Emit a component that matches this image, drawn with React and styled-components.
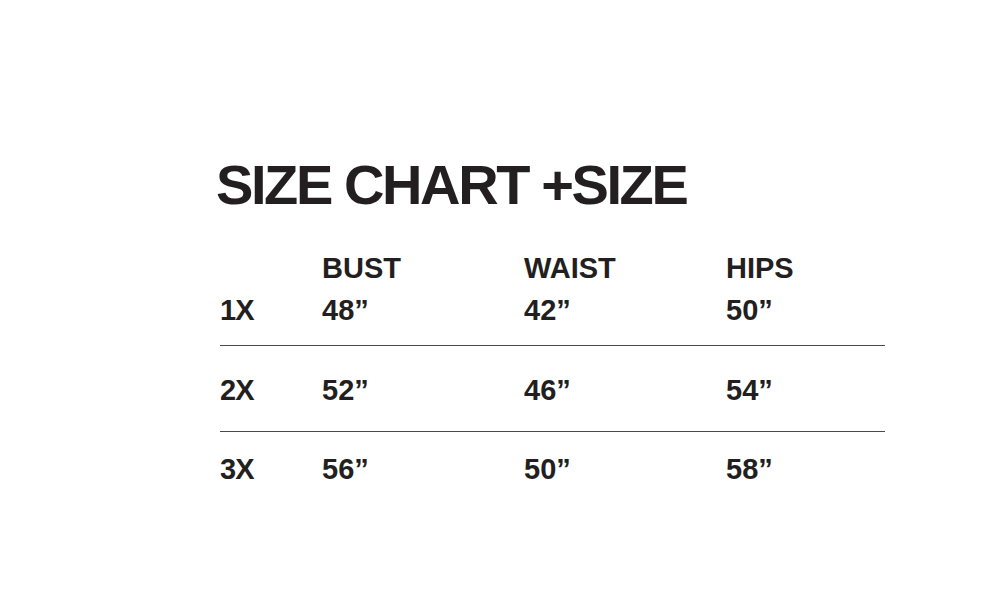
import React from "react";
import styled, { createGlobalStyle } from "styled-components";

const GlobalStyle = createGlobalStyle`
  body {
    margin: 0;
    background: #ffffff;
    font-family: "Liberation Sans", Arial, sans-serif;
    color: #231f20;
  }
`;

const Page = styled.div`
  width: 988px;
  height: 596px;
  padding: 153px 0 0 220px;
  box-sizing: border-box;
`;

const Title = styled.h1`
  margin: 0 0 0 -4px;
  font-size: 56px;
  line-height: 64px;
  letter-spacing: -2.4px;
  font-weight: 700;
`;

const Table = styled.div`
  width: 665px;
  margin-top: 35px;
`;

const Row = styled.div`
  display: grid;
  grid-template-columns: 102px 202px 202px 1fr;
  align-items: end;
  padding: ${(p) => p.$pad};
  border-bottom: ${(p) => (p.$last ? "none" : "1.5px solid #4a4a4a")};
`;

const Cell = styled.div`
  font-size: 29px;
  font-weight: 700;
  line-height: 33px;
  letter-spacing: ${(p) => (p.$label ? "-1px" : "0")};
`;

const Stack = styled.div`
  display: flex;
  flex-direction: column;
  gap: 9px;
`;

const rows = [
  { size: "1X", values: ["48”", "42”", "50”"], pad: "0 0 18px" },
  { size: "2X", values: ["52”", "46”", "54”"], pad: "28px 0 24px" },
  { size: "3X", values: ["56”", "50”", "58”"], pad: "21px 0 0" },
];

const headers = ["BUST", "WAIST", "HIPS"];

export default function App() {
  return (
    <Page>
      <GlobalStyle />
      <Title>SIZE CHART +SIZE</Title>
      <Table>
        {rows.map((r, i) => (
          <Row key={r.size} $last={i === rows.length - 1} $pad={r.pad}>
            <Cell $label>{r.size}</Cell>
            {r.values.map((v, j) =>
              i === 0 ? (
                <Stack key={j}>
                  <Cell>{headers[j]}</Cell>
                  <Cell>{v}</Cell>
                </Stack>
              ) : (
                <Cell key={j}>{v}</Cell>
              )
            )}
          </Row>
        ))}
      </Table>
    </Page>
  );
}
